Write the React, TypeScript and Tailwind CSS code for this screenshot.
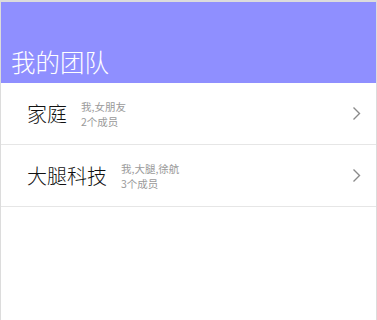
import React from "react";

type Team = {
  name: string;
  members: string;
  count: number;
};

const teams: Team[] = [
  { name: "家庭", members: "我,女朋友", count: 2 },
  { name: "大腿科技", members: "我,大腿,徐航", count: 3 },
];

const Chevron = () => (
  <svg width="9" height="15" viewBox="0 0 9 15" fill="none">
    <path d="M1.5 1.5L7.5 7.5L1.5 13.5" stroke="#8a8a8a" strokeWidth="1.4" />
  </svg>
);

const App: React.FC = () => {
  return (
    <div
      className="h-[320px] w-full border-t-2 border-r border-l border-[#dcdcdc] bg-white"
      style={{ fontFamily: '"Noto Sans CJK SC", "Noto Sans", sans-serif' }}
    >
      {/* HEADER */}
      <div className="flex h-[81px] items-end bg-[#8f8fff] pb-[5px] pl-[10px]">
        <h1 className="text-[24.5px] leading-[33px] font-light text-white">我的团队</h1>
      </div>

      {/* TEAMS */}
      {teams.map((team) => (
        <div
          key={team.name}
          className="flex h-[62px] items-center border-b border-[#e6e6e6] pr-[15px] pl-[26px]"
        >
          <span className="text-[20px] leading-none font-light text-[#111]">{team.name}</span>
          <div className="ml-[14px] flex flex-col text-[10.5px] leading-[15px] font-normal text-[#9a9a9a]">
            <span>{team.members}</span>
            <span>{team.count}个成员</span>
          </div>
          <div className="ml-auto flex items-center">
            <Chevron />
          </div>
        </div>
      ))}
    </div>
  );
};

export default App;
